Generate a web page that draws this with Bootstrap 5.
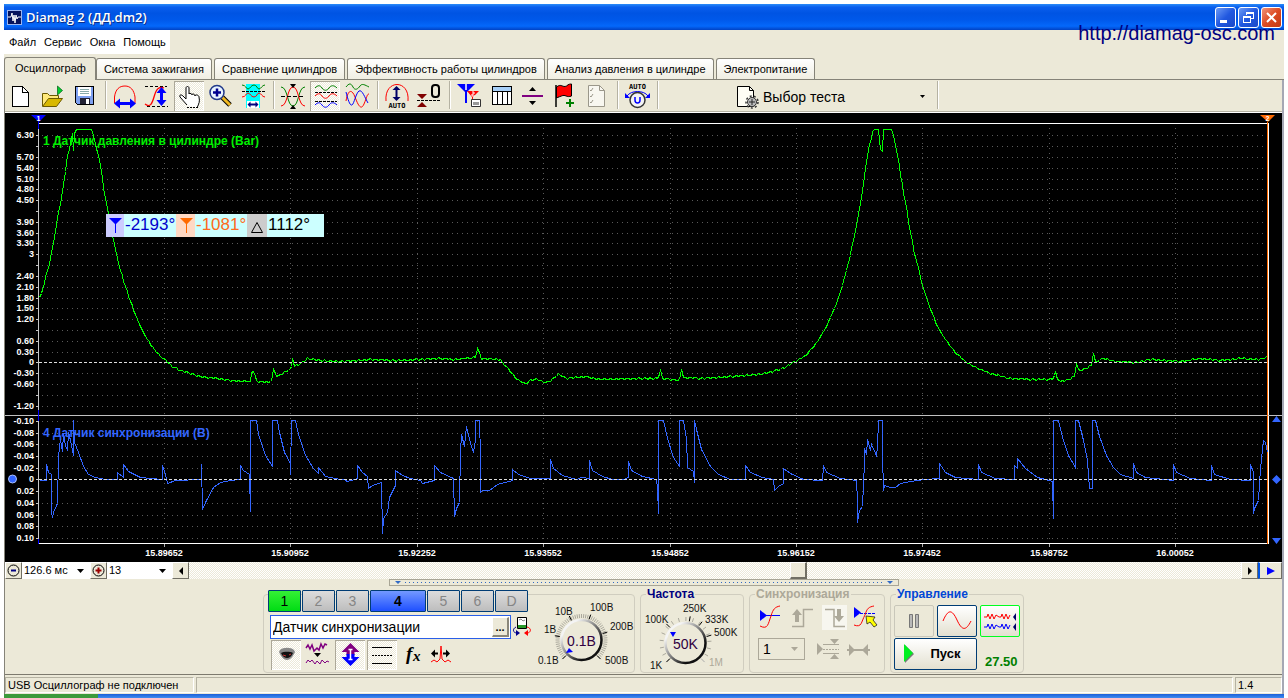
<!DOCTYPE html>
<html lang="ru">
<head>
<meta charset="utf-8">
<meta name="viewport" content="width=device-width, initial-scale=1">
<title>Diamag 2 (ДД.dm2)</title>
<link href="https://cdn.jsdelivr.net/npm/bootstrap@5.3.0/dist/css/bootstrap.min.css" rel="stylesheet">
<style>
:root{--face:#ece9d8;--shade:#aca899;--line:#d0cdbf;--navy:#003c74;--check:repeating-conic-gradient(#fff 0 25%,#ece9d8 0 50%) 0 0/2px 2px}
body{background:#fff;font:11px/14px "Liberation Sans",Arial,sans-serif;color:#000}
button,select,input{font:inherit;color:inherit}
svg{display:block}
.crisp{shape-rendering:crispEdges}
.app{margin:4px 4px 0;background:var(--face)}
.titlebar{height:26px;background:linear-gradient(#2a8cf8 0,#0a5fee 12%,#0054e3 35%,#0058ea 60%,#0468fb 85%,#0142c4 100%);padding:0 2px 0 3px}
.titletext{font:600 13px/18px "Open Sans","Noto Sans",sans-serif;color:#fff;text-shadow:1px 1px #0a2f8a}
.winbtn{width:21px;height:21px;padding:0;border:1px solid #fff;border-radius:3px;background:linear-gradient(135deg,#6d9bf5,#2158e0 50%,#1a49c8)}
.winclose{background:linear-gradient(135deg,#f0937a,#dd4a22 50%,#c23a14)}
.sitelink{position:absolute;top:21px;right:13px;font-size:20px;line-height:24px;color:#000080;text-decoration:none}
.menubar{background:#fff;height:24px;width:166px;padding-left:5px}
.menubar a{color:#000;text-decoration:none}
.tabrow{height:26px;padding-top:3px;border-bottom:1px solid #858378;gap:2px}
.tabrow button{height:21px;border:1px solid #858378;border-bottom:0;border-radius:3px 3px 0 0;background:linear-gradient(#fff,#f0eee2);padding:0 7px;white-space:nowrap}
.tabrow button.on{height:23px;background:var(--face);margin:0 -2px -1px 0;padding:0 9px 2px 10px}
.frame{border-left:1px solid #858378;border-right:2px solid #a5a8b4}
.toolbar{height:33px;padding-top:1px;border-bottom:1px solid #fff;box-shadow:inset 0 -1px #b5b2a2}
.tool{width:30px;height:30px;margin:0 1px;padding:0;border:0;background:none}
.tool svg{width:30px;height:30px}
.tool.on{background:var(--check);box-shadow:inset 1px 1px var(--shade),inset -1px -1px #fff}
.vsep{width:8px;height:28px;background:linear-gradient(90deg,transparent 4px,#b5b2a2 4px 5px,#fff 5px 6px,transparent 6px)}
.testpick{width:200px;margin-left:72px;border:0;background:none;padding:0 8px 0 3px;font-size:14px;line-height:20px}
.plot{background:#000}
.plot svg{width:100%;height:auto}
.ax{font:700 9px "Liberation Sans",Arial,sans-serif;fill:#fff}
.trace-name{font:700 12px "Liberation Sans",Arial,sans-serif}
.readout{font:17px "Liberation Sans",Arial,sans-serif}
.scrollrow{height:17px}
.mini{width:17px;height:17px;padding:0;border:1px solid #fff;border-right-color:#716f64;border-bottom-color:#716f64;background:var(--face);display:flex;align-items:center;justify-content:center}
.combo{border:0;border-radius:0;appearance:none;background:#fff url("data:image/svg+xml,%3Csvg xmlns='http://www.w3.org/2000/svg' width='7' height='4'%3E%3Cpath d='M0 0h7L3.500 4z'/%3E%3C/svg%3E") no-repeat right 6px center;height:17px;padding:0 0 0 2px;font-size:11px;line-height:17px}
.track{appearance:none;height:17px;background:var(--check);margin:0;min-width:0}
.track::-webkit-slider-thumb{appearance:none;width:17px;height:17px;background:var(--face);border:1px solid #fff;border-right:2px solid #716f64;border-bottom:2px solid #716f64;border-radius:0}
.gripbar{width:510px;height:7px;border:1px solid #a8a595;padding:0 5px}
.gripdots{height:1px;background:repeating-linear-gradient(90deg,#316ac5 0 1px,transparent 1px 4px)}
.panelrow{height:88px;padding-bottom:1px;gap:5px}
.group{border:1px solid var(--line);border-radius:4px;height:79px;padding:0;margin:0;min-width:0}
.group.titled{height:85px}
.group legend{float:none;width:auto;margin:0 0 0 5px;padding:0 1px;font:700 12px/12px "Liberation Sans",Arial,sans-serif;color:#000080}
.chan{width:33px;height:22px;padding:0;border:1px solid var(--navy);border-radius:1px;background:linear-gradient(#dcdcdc,#bdbdbd);color:#858585;font-size:14px;line-height:18px}
.chan1{background:linear-gradient(#35f035,#00dc14);color:#000}
.chan4{width:56px;background:linear-gradient(#7399ff,#1f50ff);color:#000;font-weight:700}
.namebox{width:241px;height:24px;border:1px solid #2a5fe8;background:#fff;padding:1px}
.namebox input{border:0;outline:0;background:none;font-size:14px;line-height:20px;padding:0 0 0 1px;min-width:0}
.dots{width:17px;height:20px;padding:0;border:1px solid #fff;border-right:2px solid #8a877a;border-bottom:2px solid #8a877a;background:var(--face);font-weight:700;line-height:10px}
.big{width:40px;height:32px;padding:0;border:1px solid var(--navy);border-radius:2px;background:linear-gradient(#fff,#e3e0d0)}
.big.off{border-color:#c9c7ba;background:var(--face)}
.big.lit{border:1px solid #00ff20}
.start{width:83px;font-weight:700;font-size:13px;line-height:16px}
.level{width:47px;height:22px;border:1px solid var(--shade);background:var(--face) url("data:image/svg+xml,%3Csvg xmlns='http://www.w3.org/2000/svg' width='7' height='4'%3E%3Cpath fill='%23aca899' d='M0 0h7L3.500 4z'/%3E%3C/svg%3E") no-repeat right 6px center;font-size:14px;line-height:18px;padding-left:4px}
.volt{font-weight:700;font-size:13px;line-height:16px;color:#008000}
.dial{font:10px "Liberation Sans",Arial,sans-serif}
.dial .now{font-size:14px;fill:#300040}
.statusrow{height:20px;border-top:1px solid #7d7a6e;padding-top:2px;gap:2px}
.cell{height:16px;border:1px solid #b5b2a2;border-right-color:#fff;border-bottom-color:#fff;padding:0 2px;line-height:15px;white-space:nowrap}
.taskstrip{height:4px;margin:0 4px;background:linear-gradient(90deg,#3c9a3c 0 94px,transparent 94px),linear-gradient(#1c5fd8,#3f8cf0)}
</style>
</head>
<body>
<div class="app">
  <header class="titlebar d-flex align-items-center">
    <svg width="15" height="15" viewBox="0 0 15 15"><rect width="15" height="15" fill="#06135c"/><rect x=".5" y=".5" width="14" height="14" fill="none" stroke="#9cb6f0"/><path d="M1 7h3l1-4 1 8 1-6 1 8 1-8 1 4 1-2h3" fill="none" stroke="#fff"/></svg>
    <span class="titletext ms-1 flex-grow-1">Diamag 2 (ДД.dm2)</span>
    <div class="d-flex" style="gap:2px">
      <button class="winbtn" aria-label="Свернуть"><svg width="19" height="19"><path d="M4 12h7v3H4z" fill="#fff"/></svg></button>
      <button class="winbtn" aria-label="Развернуть"><svg width="19" height="19" class="crisp" fill="none" stroke="#fff"><path d="M7.500 7V4.500h7v6H12M7 5.500h8M4.500 8.500h7v6h-7zM4 9.500h8"/></svg></button>
      <button class="winbtn winclose" aria-label="Закрыть"><svg width="19" height="19"><path d="M5 5l9 9M14 5l-9 9" stroke="#fff" stroke-width="2"/></svg></button>
    </div>
  </header>
  <nav class="menubar d-flex align-items-center gap-2"><a href="#">Файл</a><a href="#">Сервис</a><a href="#">Окна</a><a href="#">Помощь</a></nav>
  <div class="tabrow d-flex align-items-end" role="tablist">
    <button class="on" role="tab">Осциллограф</button>
    <button role="tab">Система зажигания</button>
    <button role="tab">Сравнение цилиндров</button>
    <button role="tab">Эффективность работы цилиндров</button>
    <button role="tab">Анализ давления в цилиндре</button>
    <button role="tab">Электропитание</button>
  </div>
  <main class="frame">
    <div class="toolbar d-flex">
      <button class="tool" aria-label="Новый"><svg viewBox="6 81 30 30" class="crisp"><path d="M12.500 86.500h10l6 6v14h-16z" fill="#fff" stroke="#000"/><path d="M22.500 86.500v6h6" fill="none" stroke="#000"/></svg></button>
      <button class="tool" aria-label="Открыть"><svg viewBox="38 81 30 30"><path d="M42.500 106V93.500h5l2 2h9v4" fill="#ffe97a" stroke="#6b5a00"/><path d="M42.500 106.500l6-8h14l-6 8z" fill="#d8b800" stroke="#6b5a00"/><path d="M57.500 95V86l5 4.500z" fill="#00d030" stroke="#005a10" stroke-width=".7"/></svg></button>
      <button class="tool" aria-label="Сохранить"><svg viewBox="70 81 30 30" class="crisp"><path d="M75.500 86.500h18v18h-16l-2-2z" fill="#7d9ff0" stroke="#000"/><path d="M78 87h13v9H78z" fill="#fff"/><path d="M80 89h9M80 91h9M80 93h9" stroke="#8aa"/><path d="M80 98h10v6H80z" fill="#223"/><path d="M86 99h3v5h-3z" fill="#fff"/></svg></button>
      <span class="vsep"></span>
      <button class="tool" aria-label="Период"><svg viewBox="110 81 30 30"><path d="M114.500 103v-6c1-8 5-11 10.500-11s9 4 10 11v6" fill="none" stroke="red"/><path d="M114 103.500l6-5v3.500h10v-3.500l6 5-6 5V105h-10v3.500z" fill="#00f"/></svg></button>
      <button class="tool" aria-label="Амплитуда"><svg viewBox="142 81 30 30"><path d="M145 86.500h22M147 106.500h21" stroke="#000" stroke-dasharray="3 2"/><path d="M145 104c5 4 7 0 9-7s4-11 10-9" fill="none" stroke="red" stroke-width="1.300"/><path d="M161.500 87l5 6h-3.500v7h3.500l-5 6-5-6h3.500v-7h-3.500z" fill="#00f"/></svg></button>
      <button class="tool on" aria-label="Рука"><svg viewBox="174 81 30 30"><path d="M187 105l-7-8c-1-2 1-3 3-1l3 3V88c0-2 3-2 3 0v6c0-1 3-1 3 1 0-2 3-1 3 1 0-2 4-1 4 1 1 5 0 6-2 11" fill="#fff" stroke="#000"/><path d="M187 107.500h12" stroke="#000" stroke-dasharray="2 1"/></svg></button>
      <button class="tool" aria-label="Масштаб"><svg viewBox="206 81 30 30"><path d="M222 97l8 8" stroke="#000" stroke-width="5"/><path d="M222 97l8 8" stroke="#f0b820" stroke-width="3"/><circle cx="217" cy="92.500" r="7" fill="#e8f4ff" stroke="#223a8a" stroke-width="1.500"/><path d="M213 92.500h8M217 88.500v8" stroke="#000090" stroke-width="2.500"/></svg></button>
      <button class="tool" aria-label="Выделить"><svg viewBox="238 81 30 30"><path d="M246 84h14v24h-14z" fill="#0ff"/><path d="M242 85c4 0 4 4 6 4s3-4 6-4 3 4 5 4 3-4 6-4" fill="none" stroke="green"/><path d="M242 97c4 0 4-4 6-4s3 4 6 4 3-4 5-4 3 4 6 4" fill="none" stroke="red"/><path d="M242 91.500h23" stroke="#000" stroke-dasharray="3 1"/><path d="M247 101h12v7h-12z" fill="#fff"/><path d="M247.500 104.500l3-3v2h5v-2l3 3-3 3v-2h-5v2z" fill="#000080"/></svg></button>
      <span class="vsep"></span>
      <button class="tool" aria-label="Синхронно"><svg viewBox="278 81 30 30"><path d="M281 87c7 0 6 19 12 19s5-19 12-19" fill="none" stroke="green"/><path d="M281 106c7 0 6-19 12-19s5 19 12 19" fill="none" stroke="red"/><path d="M281 96.500h24" stroke="#000" stroke-dasharray="4 2"/><path d="M290 84h6l-3 4zM290 109h6l-3-4z"/></svg></button>
      <button class="tool on" aria-label="Раздельно"><svg viewBox="310 81 30 30"><g fill="none"><path d="M315 88c3-3 5-3 7 0s5 3 7 0 5-3 8 0" stroke="green"/><path d="M315 96c3-3 5-3 7 0s5 3 7 0 5-3 8 0" stroke="red"/><path d="M315 105c3-3 5-3 7 0s5 3 7 0 5-3 8 0" stroke="#00f"/></g><path d="M315 92.500h22M315 101.500h22" stroke="#000" stroke-dasharray="3 1"/></svg></button>
      <button class="tool" aria-label="Совместно"><svg viewBox="342 81 30 30"><g fill="none"><path d="M346 87c3-4 5-4 7 0s5 2 7-1 5-1 9 1" stroke="green"/><path d="M346 101c2-12 6-12 9-4s6 14 9 7 3-10 5-10" stroke="red"/><path d="M346 92c2 8 4 14 6 13s4-12 7-14 6 7 9 12" stroke="#00f"/></g></svg></button>
      <span class="vsep"></span>
      <button class="tool" aria-label="Авто"><svg viewBox="382 81 30 30"><path d="M386 101c-2-22 24-22 22 0" fill="none" stroke="red"/><path d="M396.500 86l4 4h-3v7h3l-4 4-4-4h3v-7h-3z" fill="#006"/><text x="397" y="108" text-anchor="middle" style="font:700 7px 'DejaVu Sans Mono',monospace">AUTO</text></svg></button>
      <button class="tool" aria-label="Ноль"><svg viewBox="414 81 30 30"><path d="M417 94h10l-5 5zM417 107h10l-5-5z" fill="#800000"/><path d="M417 100.500h23" stroke="#000" stroke-dasharray="3 1"/><rect x="432" y="85" width="7" height="12" rx="3" fill="none" stroke="#000" stroke-width="2"/></svg></button>
      <span class="vsep"></span>
      <button class="tool" aria-label="Маркеры"><svg viewBox="454 81 30 30"><path d="M457 84h18l-8 8v11h-2V92z" fill="#00f"/><path d="M467 91h12l-6 6v9h-1v-9z" fill="red"/><path d="M466 84v6" stroke="#fff" stroke-width="1.500"/><path d="M472 92h2v2h-2v2h3" fill="none" stroke="#fff"/><path d="M471.500 99.500h9v7h-9z" fill="#fff" stroke="#333"/><path d="M474 102v3M476 102v3M478 102v3" stroke="#333"/></svg></button>
      <button class="tool" aria-label="Таблица"><svg viewBox="486 81 30 30" class="crisp"><path d="M492.500 86.500h19v18h-19z" fill="#fff" stroke="#000"/><path d="M493 87h18v4h-18z" fill="#a8d0f8"/><path d="M492 91.500h19M497.500 92v13M502.500 92v13M507.500 92v13" stroke="#000"/></svg></button>
      <button class="tool" aria-label="Сдвиг"><svg viewBox="518 81 30 30"><path d="M522 95h21v2h-21z" fill="#800080"/><path d="M529 91h7l-3.500-4zM529 101h7l-3.500 4z"/></svg></button>
      <button class="tool" aria-label="Метка"><svg viewBox="550 81 30 30"><path d="M556 85v22" stroke="#000" stroke-width="1.500"/><path d="M556.500 87c5-4 6 1 10-1 2-2 4-2 5-2v12c-5 2-6-2-10 0-3 1-5 2-5 2z" fill="red" stroke="#000"/><path d="M566 103h8M570 99v8" stroke="green" stroke-width="2"/></svg></button>
      <button class="tool" aria-label="Отчёт"><svg viewBox="582 81 30 30" fill="none" stroke="#9a978a"><path d="M588.500 85.500h11l5 5v16h-16z" fill="#f8f7f0"/><path d="M599.500 85.500v5h5M590 90l1 1 2-3M590 96l1 1 2-3M590 102l1 1 2-3"/></svg></button>
      <span class="vsep"></span>
      <button class="tool" aria-label="Автодиапазон"><svg viewBox="622 81 30 30"><text x="637.500" y="89" text-anchor="middle" style="font:700 7px 'DejaVu Sans Mono',monospace">AUTO</text><path d="M627 96c4-6 17-6 21 0" fill="none" stroke="#00f"/><path d="M625 93v5h5zM650 93v5h-5z" fill="#00f"/><circle cx="637.500" cy="100" r="7.500" fill="#f4f4f4" stroke="#333" stroke-width="1.500"/><path d="M635 97v3c0 4 5 4 5 0v-3" fill="none" stroke="#00f" stroke-width="1.500"/></svg></button>
      <span class="vsep"></span>
      <button class="testpick d-flex align-items-center text-start"><svg width="24" height="26" viewBox="736 83 24 26"><path d="M737.500 85.500h12l4 4v16h-16z" fill="#fffef5" stroke="#000"/><path d="M749.500 85.500v4h4" fill="none" stroke="#000"/><circle cx="752" cy="101" r="4.500" fill="#bbb" stroke="#333"/><circle cx="752" cy="101" r="6" fill="none" stroke="#333" stroke-width="1.500" stroke-dasharray="2 2.200"/><path d="M749 101h6M752 98v6" stroke="#222"/></svg><span class="flex-grow-1" style="margin-left:3px">Выбор теста</span><svg width="5" height="3"><path d="M0 0h5L2.500 3z"/></svg></button>
      <span class="vsep"></span>
    </div>
    <div class="plot">
      <svg id="scope" viewBox="5 113 1277 449">
        <g id="grid" class="crisp"></g>
        <g class="crisp" fill="none">
          <path d="M38.500 123v291M38.500 416v128" stroke="#c8c8c8"/>
          <path d="M39 123.500h1230M39 543.500h1230M1268.500 123v421" stroke="#fff"/>
          <path d="M5 415.500h1277" stroke="#c0c0c0"/>
          <path d="M38.500 119v10M38.500 410v11M38.500 539v5" stroke="#00f"/>
          <path d="M1267.500 122v422" stroke="#ff6a00"/>
        </g>
        <text class="trace-name" x="43" y="145" fill="#00f000">1 Датчик давления в цилиндре (Bar)</text>
        <text class="trace-name" x="43" y="437" fill="#3366ff">4 Датчик синхронизации (В)</text>
        <polyline id="pressure" class="crisp" fill="none" stroke="#0f0"/>
        <polyline id="sync" class="crisp" fill="none" stroke="#3366ff"/>
        <path class="crisp" d="M39 362.500h1228M39 479.500h1228" stroke="#ddd" stroke-dasharray="3 2"/>
        <g id="labels" class="ax"></g>
        <path d="M31 115h15l-7 7z" fill="#00f"/><path d="M1260 115h15l-7 7z" fill="#ff6a00"/>
        <text x="38.500" y="121" text-anchor="middle" style="font:700 7px 'Liberation Sans',sans-serif" fill="#fff">1</text>
        <text x="1267.500" y="121" text-anchor="middle" style="font:700 7px 'Liberation Sans',sans-serif" fill="#fff">2</text>
        <circle cx="12.500" cy="479" r="4" fill="#3366ff" stroke="#a9c0ff"/>
        <path d="M1272 422h9l-4.500-6zM1272 538h9l-4.500 6zM1272 479.500l4.500-4.500 4.500 4.500-4.500 4.500z" fill="#3366ff"/>
        <g class="readout">
          <path d="M106 214h218v23H106z" fill="#cff"/><path d="M106 214h18v23h-18z" fill="#ccf"/><path d="M176 214h19v23h-19z" fill="#ffd9c4"/><path d="M247 214h20v23h-20z" fill="#ccc"/>
          <path d="M109 218h13l-6 6v9h-1v-9z" fill="#00f"/><path d="M180 218h13l-6 6v9h-1v-9z" fill="#ff6a00"/><path d="M251.500 232.500h11l-5.500-10z" fill="none" stroke="#000"/>
          <text x="125" y="230" fill="#00c">-2193°</text><text x="196" y="230" fill="#ff6a20">-1081°</text><text x="268" y="230">1112°</text>
        </g>
      </svg>
    </div>
    <div class="scrollrow d-flex">
      <button class="mini" aria-label="Меньше"><svg width="13" height="13"><circle cx="6.500" cy="6.500" r="5.500" fill="none" stroke="#000"/><path d="M4 6.500h5" stroke="#000080" stroke-width="2"/></svg></button>
      <select class="combo" style="width:68px" aria-label="Развёртка"><option>126.6 мс</option></select>
      <button class="mini" aria-label="Больше"><svg width="13" height="13"><circle cx="6.500" cy="6.500" r="5.500" fill="none" stroke="#000"/><path d="M3.500 6.500h6M6.500 3.500v6" stroke="#900" stroke-width="2"/></svg></button>
      <select class="combo" style="width:65px" aria-label="Масштаб"><option>13</option></select>
      <button class="mini" aria-label="Влево"><svg width="4" height="8"><path d="M4 0v8L0 4z"/></svg></button>
      <input class="track flex-grow-1" type="range" min="0" max="1000" value="581" aria-label="Прокрутка">
      <button class="mini" aria-label="Вправо"><svg width="4" height="8"><path d="M0 0v8l4-4z"/></svg></button>
      <button class="mini" style="width:24px;border-left:2px solid #0054e3" aria-label="В конец"><svg width="8" height="8"><path d="M0 0v8l8-4z" fill="#00f"/></svg></button>
    </div>
    <div class="gripbar mx-auto d-flex align-items-center gap-1"><svg width="6" height="3"><path d="M0 0h6L3 3z" fill="#316ac5"/></svg><div class="gripdots flex-grow-1"></div><svg width="6" height="3"><path d="M0 0h6L3 3z" fill="#316ac5"/></svg></div>

    <div class="panelrow d-flex justify-content-center align-items-end">
      <fieldset class="group d-flex">
        <div class="d-flex flex-column" style="margin:-5px 0 0 4px">
          <div class="d-flex" style="gap:1px"><button class="chan chan1">1</button><button class="chan">2</button><button class="chan">3</button><button class="chan chan4">4</button><button class="chan">5</button><button class="chan">6</button><button class="chan">D</button></div>
          <div class="d-flex align-items-center" style="margin:3px 0 0 2px">
            <div class="namebox d-flex"><input class="flex-grow-1" value="Датчик синхронизации" aria-label="Имя канала"><button class="dots">...</button></div>
            <button class="border-0 bg-transparent p-0" aria-label="Сменить датчик"><svg width="22" height="24" viewBox="511 615 22 24"><path d="M517.500 617.500h9v11h-9z" fill="#fff" stroke="#000"/><path d="M519 620l2-1 2 2 2-1" fill="none" stroke="#888"/><path d="M518 625h8v3h-8z" fill="#2a9a2a"/><path d="M516 627c-4 2-3 6 1 6" fill="none" stroke="#00008a"/><path d="M516 630l4 3-4 3z" fill="#00008a"/><path d="M527 627c5 1 4 6 0 6" fill="none" stroke="red"/><path d="M528 630l-4 3 4 3z" fill="red"/></svg></button>
          </div>
          <div class="d-flex" style="margin:1px 0 0 2px">
            <button class="tool on" aria-label="Видимость"><svg viewBox="270 640 30 30"><path d="M279 650c3-3 11-3 14 0l1 2c-2 5-5 8-8 8-4 0-6-4-8-8z" fill="#888"/><path d="M280 653c2-1 8-2 12 0-1 3-4 5-6 5s-5-2-6-5z" fill="#111"/><path d="M282 655l3 1M288 655l2-1" stroke="#c33"/></svg></button>
            <button class="tool" aria-label="Сглаживание"><svg viewBox="300 640 30 30"><path d="M303 648l2-3 2 4 2-4 2 6 3-3 2 2 2-6 2 4 2-4 2 1" fill="none" stroke="purple" stroke-width="1.500"/><path d="M311 653h7l-3.500 4z"/><path d="M303 663l2-3 2 2 2-2 3 4 2-3 3 3 2-4 3 3 2-2 2 1" fill="none" stroke="purple"/></svg></button>
            <button class="tool on" aria-label="Инверсия"><svg viewBox="330 640 30 30"><path d="M345.500 643l9 9h-5v3h-8v-3h-5z" fill="purple"/><path d="M345.500 666l9-9h-5v-3h-8v3h-5z" fill="#00f"/><path d="M345.500 649v11M343.500 649.500h4M343.500 659.500h4" stroke="#fff" stroke-width="1.500"/></svg></button>
            <button class="tool on" aria-label="Сетка"><svg viewBox="360 640 30 30" class="crisp"><path d="M365 647.500h20M365 663.500h20" stroke="#000"/><path d="M365 655.500h20" stroke="#000" stroke-dasharray="2 1"/></svg></button>
            <button class="tool" aria-label="Функция"><svg viewBox="392 640 30 30"><text x="399" y="660" style="font:italic 700 19px 'Liberation Serif',serif">f</text><text x="406" y="661" style="font:italic 700 15px 'Liberation Serif',serif">x</text></svg></button>
            <button class="tool" aria-label="Растянуть"><svg viewBox="424 640 30 30"><path d="M424 662l3-2 3 2 3-3 1-13 1 13 3 3 3-2 3 2" fill="none" stroke="red"/><path d="M424 653.500l4-4v3h3v2h-3v3zM443 653.500l-4-4v3h-3v2h3v3z"/></svg></button>
          </div>
        </div>
        <svg class="dial flex-shrink-0" width="101" height="77" viewBox="532 595 101 77" id="dialV"></svg>
      </fieldset>
      <fieldset class="group titled"><legend>Частота</legend><svg class="dial" width="102" height="71" viewBox="640 600 102 71" id="dialF"></svg></fieldset>
      <fieldset class="group titled" style="width:136px"><legend style="color:#aca899;font-weight:700">Синхронизация</legend>
        <div class="d-flex ps-1" style="padding-top:3px">
          <button class="tool" aria-label="Уровень"><svg viewBox="755 605 30 30"><path d="M760 612v11l7-5.500z" fill="#00f"/><path d="M765 617.500h15" stroke="#00f"/><path d="M760 628c8 4 8-2 11-10 2-7 4-9 9-10" fill="none" stroke="red"/></svg></button>
          <button class="tool" aria-label="Фронт"><svg viewBox="785 605 30 30"><path d="M790 628.500h11.500v-17H811" fill="none" stroke="#aca899" stroke-width="1.500"/><path d="M795 611l5 6h-3v7h-4v-7h-3z" fill="#aca899"/></svg></button>
          <button class="tool" aria-label="Спад"><svg viewBox="815 605 30 30"><path d="M818 607h25v25h-25z" fill="#fff" opacity=".6"/><path d="M821 611.500h9v17h11" fill="none" stroke="#aca899" stroke-width="1.500"/><path d="M835 624l5-6h-3v-7h-4v7h-3z" fill="#aca899"/></svg></button>
          <button class="tool" aria-label="Выбор уровня"><svg viewBox="847 605 30 30"><path d="M850 609v11l7-5.500z" fill="#00f"/><path d="M856 615.500h15" stroke="#00f" stroke-dasharray="3 1"/><path d="M850 627c8 3 7-3 11-10 2-7 4-8 9-9" fill="none" stroke="red"/><path d="M862 618l9 1-2 3 4 5-3 2-4-5-3 2z" fill="#ff0" stroke="#222" stroke-width=".8"/></svg></button>
        </div>
        <div class="d-flex align-items-center ps-2" style="padding-top:3px">
          <select class="level combo" disabled aria-label="Канал синхронизации"><option>1</option></select>
          <svg class="ms-2" width="60" height="26" viewBox="812 638 60 26" fill="#aca899" stroke="#aca899"><path d="M816 645v12l6-6z" stroke="none"/><path d="M822 646.500h16M822 655.500h16"/><path d="M822 651.500h16" stroke-dasharray="2 1"/><path d="M829 641h9l-4.500 5zM829 661h9l-4.500-5zM848 646l6 6-6 6zM867 646l-6 6 6 6z" stroke="none"/><path d="M846 652h23" stroke-width="2"/></svg>
        </div>
      </fieldset>
      <fieldset class="group titled" style="width:134px"><legend style="color:#0046d5">Управление</legend>
        <div class="d-flex" style="gap:3px;padding:5px 0 0 3px">
          <button class="big off" disabled aria-label="Пауза"><svg class="mx-auto" width="12" height="16"><path d="M1.500 1.500h3v13h-3zM7.500 1.500h3v13h-3z" fill="#b8b8b8" stroke="#777"/></svg></button>
          <button class="big" aria-label="Синус"><svg class="mx-auto" width="30" height="24"><path d="M1 12C6 0 10 0 15 11s9 11 14 1" fill="none" stroke="red"/></svg></button>
          <button class="big lit" aria-label="Запись"><svg class="mx-auto" width="34" height="24" fill="none"><path d="M1 8h3l1-3 2 5 2-5 2 5 2-4 3 2h2l1-3 2 5 2-5 2 5 2-4" stroke="red"/><path d="M1 18h3l1-3 2 5 2-5 2 5 2-4 3 2h2l1-3 2 5 2-5 2 5 2-4" stroke="#00f"/><path d="M33 4v8l-3-4zM33 14v8l-3-4z" fill="#006"/></svg></button>
        </div>
        <div class="d-flex align-items-end" style="gap:8px;padding:1px 0 0 3px">
          <button class="big start d-flex align-items-center"><svg class="ms-2" width="12" height="20"><path d="M2 1v18l9-9z" fill="#777"/><path d="M1 0v18l9-9z" fill="#00f020"/></svg><span class="flex-grow-1">Пуск</span></button>
          <output class="volt">27.50</output>
        </div>
      </fieldset>
    </div>
    <footer class="statusrow d-flex"><div class="cell" style="width:189px">USB Осциллограф не подключен</div><div class="cell flex-grow-1"></div><div class="cell" style="width:47px">1.4</div></footer>
  </main>
</div>
<div class="taskstrip"></div>
<script>
const put=(id,s)=>document.getElementById(id).insertAdjacentHTML('beforeend',s);

// Axis scales, grid and labels
let grid='',lab='';
const yBar=v=>Math.round(362.4-v*36.05), ySync=v=>Math.round(479.4+v*585);
const skip=['6.00','4.20','2.70','0.90','-0.90'];
for(let k=21;k>=-4;k--){
  const v=k*.3,t=v.toFixed(2),y=yBar(v);
  if(k)grid+=`<path d="M42 ${y}.5H1267" stroke="#5a5a5a" stroke-dasharray="1 4"/>`;
  grid+=`<path d="M36 ${y}.5h3" stroke="#c8c8c8"/>`;
  if(!skip.includes(t))lab+=`<text x="34" y="${y+3}" text-anchor="end">${k===0?'0':k===10?'3':t}</text>`;
}
for(let k=-5;k<=5;k++){
  const y=ySync(k*.02);
  if(k)grid+=`<path d="M42 ${y}.5H1267" stroke="#5a5a5a" stroke-dasharray="1 4"/>`;
  grid+=`<path d="M36 ${y}.5h3" stroke="#c8c8c8"/>`;
  lab+=`<text x="34" y="${y+3}" text-anchor="end">${k?(k*.02).toFixed(2):'0'}</text>`;
}
['15.89652','15.90952','15.92252','15.93552','15.94852','15.96152','15.97452','15.98752','16.00052'].forEach((t,i)=>{
  const x=Math.round(164+i*126.4);
  grid+=`<path d="M${x}.5 128V543" stroke="#5a5a5a" stroke-dasharray="1 4"/><path d="M${x}.5 544v3" stroke="#aaa"/>`;
  lab+=`<text x="${x}" y="556" text-anchor="middle">${t}</text>`;
});
put('grid',grid);put('labels',lab);

const P=[39,297,42,289,47,270,50,257,54,237,58,211,61,197,65,171,67,155,70,142,72,133,73,150,74,133,76,129,91,129,93,135,97,152,100,166,103,188,107,208,112,236,115,250,120,270,125,286,130,301,135,314,139,324,145,336,152,347,160,356,165,360,172,366,180,370,190,373,200,376,215,378,230,380,250,381,251,372,253,371,256,381,268,382,271,380,273,369,276,376,280,374,288,370,291,366,292,358,294,366,300,363,307,358,320,360,340,361,370,359,390,360,420,359,440,358,455,359,475,357,477,348,479,352,481,358,500,359,504,364,510,371,515,377,520,381,525,383,530,380,536,379,545,382,550,380,558,374,567,378,585,376,600,379,640,378,657,378,660,369,662,378,678,380,681,369,683,377,700,378,730,376,760,374,780,369,795,361,805,355,815,344,823,331,830,317,836,303,842,285,848,262,853,240,857,219,861,197,865,168,869,144,872,131,874,129,878,129,880,149,882,151,883,129,891,129,893,135,897,155,900,175,905,202,910,232,915,257,922,285,930,309,937,326,945,339,955,352,965,361,975,367,990,373,1010,378,1030,379,1052,379,1055,371,1057,379,1060,381,1068,379,1074,376,1076,363,1078,370,1085,368,1091,365,1093,353,1095,362,1103,358,1115,361,1135,362,1150,359,1180,361,1200,358,1220,360,1240,358,1258,359,1268,356];
const S=[39,480,46,480,46,464,48,472,51,474,51,512,52,517,53,512,57,503,58,457,59,447,60,439,62,451,63,433,65,445,67,450,68,432,70,440,73,455,73,420,74,442,78,452,83,466,88,474,95,477,105,479,117,479,117,472,123,477,123,464,128,471,140,477,162,479,162,465,165,474,167,483,175,480,201,479,201,464,202,509,206,500,213,487,220,482,230,480,240,479,240,465,243,470,249,474,250,511,250,420,256,420,258,434,265,455,272,466,272,420,277,420,279,432,284,452,290,463,290,474,291,420,295,420,298,434,305,455,313,468,318,473,318,467,325,476,340,479,345,479,346,481,355,479,357,478,357,465,362,472,367,476,368,488,372,485,381,482,382,533,383,518,387,512,389,497,395,485,395,470,402,475,410,478,420,480,422,483,434,480,434,465,440,472,453,478,454,516,456,508,459,502,460,451,461,434,464,446,466,426,470,443,473,452,475,440,475,420,479,420,480,455,480,492,482,490,489,490,497,484,512,480,512,469,518,474,530,478,550,478,550,459,553,468,562,475,576,479,581,477,589,478,589,460,592,470,602,476,612,479,623,479,628,477,628,461,631,470,642,476,656,479,657,487,658,513,658,420,663,420,667,438,673,457,679,466,679,420,683,420,686,438,687,467,693,471,694,482,694,420,696,429,701,449,710,466,718,474,730,479,745,479,745,465,750,472,762,477,773,479,774,490,778,486,783,483,783,468,790,473,803,479,822,480,823,465,826,472,840,478,856,480,857,500,857,522,859,510,862,506,864,462,864,448,866,454,867,439,870,450,871,444,876,455,877,446,878,420,882,420,882,454,883,490,884,485,890,487,895,487,900,483,910,481,924,479,939,478,939,463,945,472,955,477,978,479,978,464,981,472,995,478,1014,479,1014,465,1017,468,1017,458,1025,468,1037,477,1049,480,1052,481,1053,518,1053,420,1058,420,1062,437,1068,455,1075,467,1075,420,1078,420,1083,440,1087,460,1089,488,1092,488,1092,420,1095,420,1099,436,1106,455,1113,467,1120,474,1133,478,1133,463,1136,472,1145,477,1173,480,1173,464,1176,472,1190,478,1211,480,1211,465,1214,474,1230,479,1250,480,1250,464,1253,472,1253,513,1254,508,1258,500,1260,468,1263,440,1265,442,1267,452];
// Sensor ripple on the flat stretches of the pressure trace
const pts=[];
for(let i=0;i<P.length-2;i+=2){
  const [x,y,u,v]=P.slice(i,i+4),n=Math.max(1,Math.round((u-x)/2));
  for(let j=0;j<n;j++){const px=x+(u-x)*j/n;let py=y+(v-y)*j/n;
    if(py>340&&n>2)py+=Math.sin(px*1.1)*.8;
    pts.push(Math.round(px)+.5+','+(Math.round(py)+.5));}
}
document.getElementById('pressure').setAttribute('points',pts.join(' '));
document.getElementById('sync').setAttribute('points',S.map(v=>v+.5).join(' '));

// Rotary dials
function dial(id,cx,cy,marks,step,now,ptr){
  let s=`<defs><linearGradient id="${id}g" x1="0" y1="0" x2="1" y2="1"><stop offset=".2" stop-color="#f4f4f4"/><stop offset=".75" stop-color="#111"/></linearGradient></defs>`;
  for(let a=-225;a<=45;a+=step){const r=a*Math.PI/180,c=Math.cos(r),n=Math.sin(r);
    s+=`<path d="M${cx+c*22} ${cy+n*22}L${cx+c*26} ${cy+n*26}" stroke="#aaa89c"/>`;}
  s+=`<circle cx="${cx}" cy="${cy}" r="20" fill="#ece9d8" stroke="url(#${id}g)" stroke-width="2.500"/>`;
  marks.forEach(([t,x,y,a,dim])=>{const r=a*Math.PI/180,c=Math.cos(r),n=Math.sin(r);
    s+=`<path d="M${cx+c*22} ${cy+n*22}L${cx+c*27} ${cy+n*27}" stroke="${dim?'#aaa':'#000'}"/><text x="${x}" y="${y}" fill="${dim?'#aca899':'#111'}">${t}</text>`;});
  s+=`<path d="${ptr}" fill="#00f"/><text class="now" x="${cx}" y="${cy+6}" text-anchor="middle">${now}</text>`;
  put(id,s);
}
dial('dialV',580.5,640,[['0.1В',537,664,-225],['1В',543,633,-171],['10В',554,615,-117],['100В',589,611,-70],['200В',609,630,-17],['500В',604,664,45]],5,'0.1В','M565 653l3-5 4 4z');
dial('dialF',684.5,643,[['1K',649,669,-225],['100K',644,623,-135],['250K',682,612,-80],['333K',704,623,-52],['500K',713,636,-17],['1M',708,666,45,1]],17,'50K','M669 632h6l-3 5z');
</script>
<script src="https://cdn.jsdelivr.net/npm/bootstrap@5.3.0/dist/js/bootstrap.bundle.min.js"></script>
<a class="sitelink" href="http://diamag-osc.com">http://diamag-osc.com</a>
</body>
</html>
